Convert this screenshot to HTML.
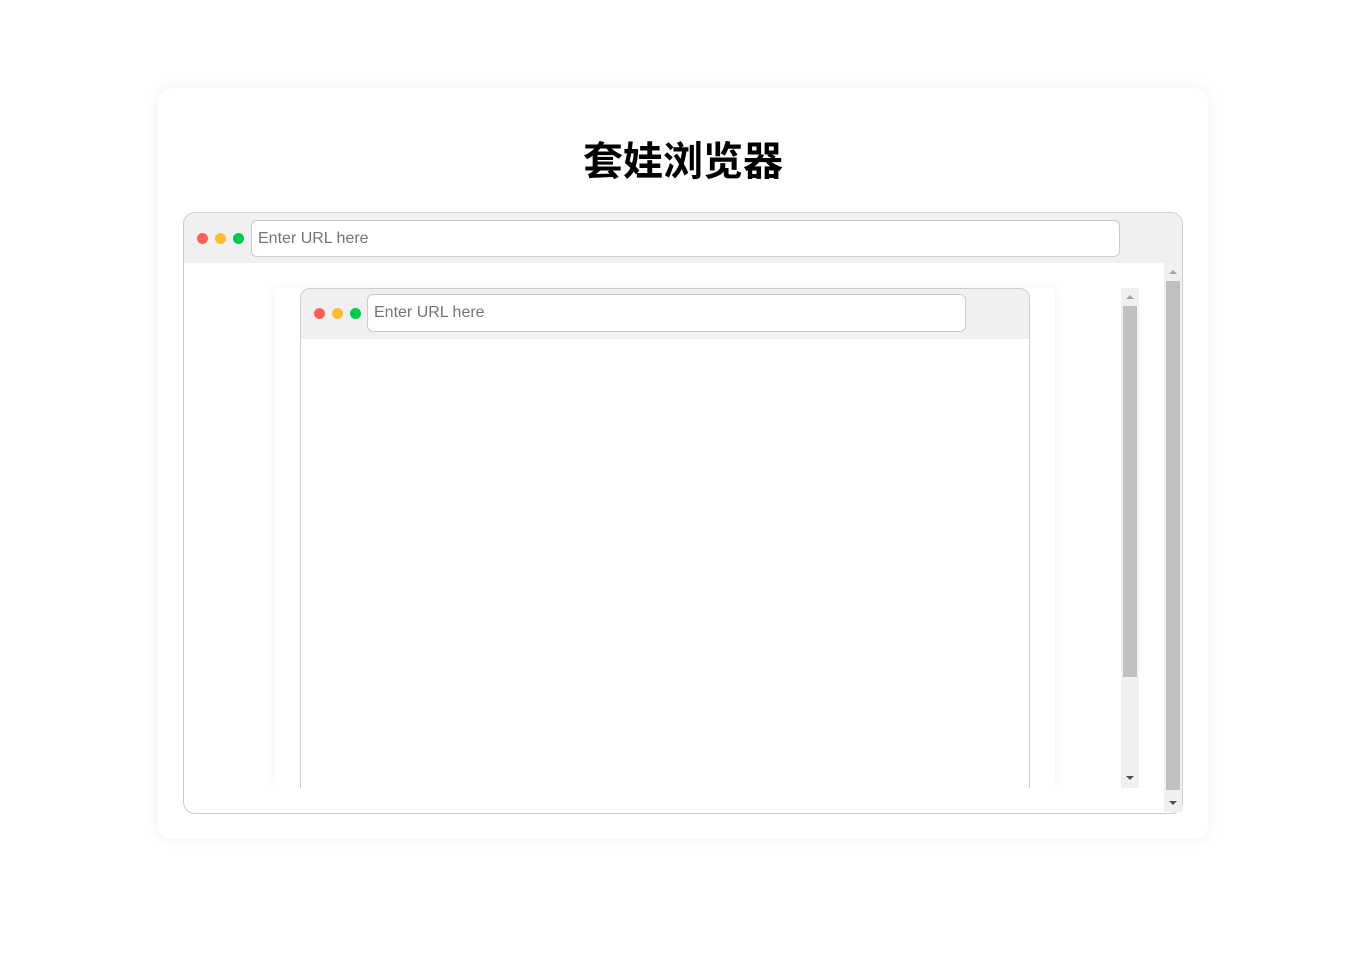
<!DOCTYPE html>
<html><head><meta charset="utf-8"><style>
body{margin:0;width:1352px;height:975px;background:#fff;font-family:"Liberation Sans","Noto Sans CJK SC",sans-serif;position:relative;overflow:hidden}
.abs{position:absolute;box-sizing:border-box}
.card{left:158px;top:88px;width:1050px;height:751px;border-radius:14px;background:#fff;box-shadow:0 0 14px rgba(0,0,0,0.07)}
h1{position:absolute;left:158px;width:1050px;top:138px;margin:0;text-align:center;font-size:40px;font-weight:bold;line-height:48px;color:#000}
.br{border:1px solid #ccc;border-radius:12px;background:#fff;overflow:hidden}
.tb{background:#f0f0f0}
.dot{width:11px;height:11px;border-radius:50%}
.url{border:1px solid #ccc;border-radius:6px;background:#fff;font-size:16px;color:#757575;padding-left:6px;line-height:36px}
.sb{background:#f0f0f0}
.th{background:#c0c0c0}
.up{width:0;height:0;border-left:4px solid transparent;border-right:4px solid transparent;border-bottom:4px solid #a3a3a3}
.dn{width:0;height:0;border-left:4px solid transparent;border-right:4px solid transparent;border-top:4px solid #505050}
</style></head><body>
<div class="abs card"></div>
<h1>套娃浏览器</h1>
<div class="abs br" style="left:183px;top:212px;width:1000px;height:602px">
  <div class="abs tb" style="left:0;top:0;width:998px;height:50px"></div>
</div>
<div class="abs dot" style="left:197px;top:233px;background:#ff5f57"></div>
<div class="abs dot" style="left:215px;top:233px;background:#ffbd2e"></div>
<div class="abs dot" style="left:233px;top:233px;background:#00ca4e"></div>
<div class="abs url" style="left:251px;top:220px;width:869px;height:37px">Enter URL here</div>
<div class="abs sb" style="left:1164px;top:263px;width:18px;height:549px"></div>
<div class="abs th" style="left:1166px;top:281px;width:14px;height:509px"></div>
<div class="abs up" style="left:1169px;top:270px"></div>
<div class="abs dn" style="left:1169px;top:801px"></div>

<div class="abs" style="left:275px;top:288px;width:780px;height:500px;background:#fff;box-shadow:0 0 10px rgba(0,0,0,0.06)"></div>
<div class="abs" style="left:300px;top:288px;width:730px;height:520px;border:1px solid #ccc;border-radius:10px;background:#fff;overflow:hidden">
  <div class="abs tb" style="left:0;top:0;width:728px;height:50px"></div>
</div>
<div class="abs" style="left:270px;top:788px;width:800px;height:24px;background:#fff"></div>
<div class="abs dot" style="left:314px;top:308px;background:#ff5f57"></div>
<div class="abs dot" style="left:332px;top:308px;background:#ffbd2e"></div>
<div class="abs dot" style="left:350px;top:308px;background:#00ca4e"></div>
<div class="abs url" style="left:367px;top:294px;width:599px;height:38px">Enter URL here</div>
<div class="abs sb" style="left:1121px;top:288px;width:18px;height:500px"></div>
<div class="abs th" style="left:1123px;top:306px;width:14px;height:371px"></div>
<div class="abs up" style="left:1126px;top:295px"></div>
<div class="abs dn" style="left:1126px;top:776px"></div>
</body></html>
